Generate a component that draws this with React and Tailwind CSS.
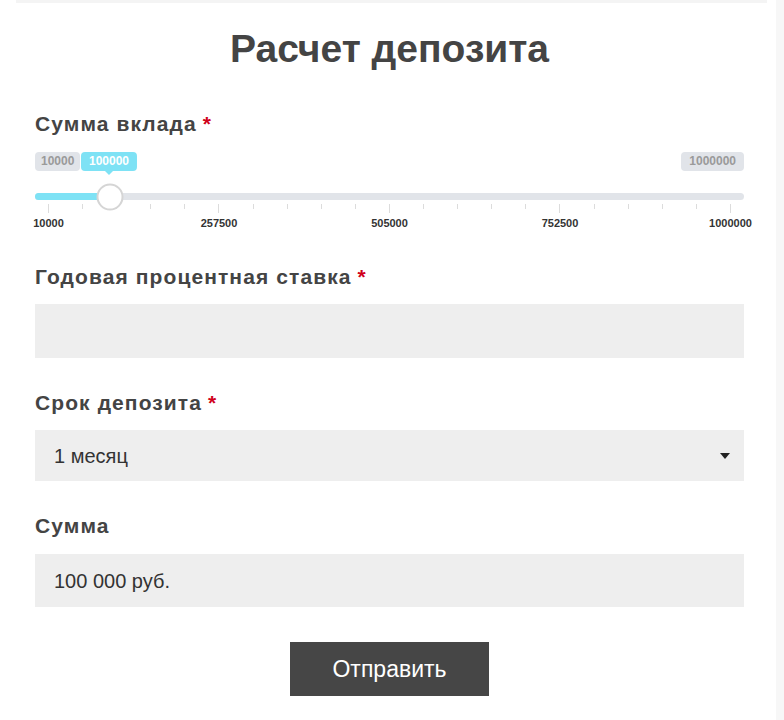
import React from 'react';

const MIN = 10000;
const MAX = 1000000;
const VALUE = 100000;

// grid spans from 13px to 695px inside the 709px slider box
const GRID_LEFT = 13;
const GRID_WIDTH = 682;

const Label = ({ children, required, className = '' }) => (
    <div className={`text-[21px] leading-[24px] font-bold tracking-[1.1px] text-[#444] ${className}`}>
        {children}
        {required && <span className="text-[#d0021b] ml-[6px]">*</span>}
    </div>
);

const Pill = ({ children, className = '' }) => (
    <div className={`h-[19px] rounded-[4px] bg-[#e1e4e9] text-[#9a9a9a] text-[12px] font-bold leading-[19px] ${className}`}>
        {children}
    </div>
);

const RangeSlider = () => {
    const pos = GRID_LEFT + ((VALUE - MIN) / (MAX - MIN)) * GRID_WIDTH;
    const ticks = Array.from({ length: 21 }, (_, i) => i % 5 === 0);
    const labels = [10000, 257500, 505000, 752500, 1000000];

    return (
        <div className="mt-[14px] flex flex-col">
            {/* min / max pills, current value floats over them */}
            <div className="relative flex justify-between pt-[2px]">
                <Pill className="px-[6px]">{MIN}</Pill>
                <Pill className="px-[8px]">{MAX}</Pill>
                <div
                    className="absolute top-[2px] -translate-x-1/2 h-[19px] px-[8px] rounded-[4px] bg-[#7ee2f5] text-white text-[12px] font-bold leading-[19px]"
                    style={{ left: pos - 1 }}
                >
                    {VALUE}
                    <span className="absolute left-1/2 -translate-x-1/2 top-full w-0 h-0 border-x-[4px] border-x-transparent border-t-[4px] border-t-[#7ee2f5]" />
                </div>
            </div>

            {/* track */}
            <div className="relative mt-[22px] h-[7px] rounded-full bg-[#e1e4e9]">
                <div className="h-full rounded-full bg-[#7ee2f5]" style={{ width: pos }} />
                <div
                    className="absolute top-1/2 -translate-x-1/2 -translate-y-1/2 w-[27px] h-[27px] rounded-full bg-white border-2 border-[#d5d5d5]"
                    style={{ left: pos }}
                />
            </div>

            {/* ticks */}
            <div className="mt-[4px] ml-[13px] w-[683px] flex justify-between items-start">
                {ticks.map((major, i) => (
                    <div key={i} className={`w-px bg-[#dcdcdc] ${major ? 'h-[9px]' : 'h-[5px]'}`} />
                ))}
            </div>
            <div className="mt-[4px] ml-[13px] w-[683px] flex justify-between">
                {labels.map((l) => (
                    <div key={l} className="w-px flex justify-center">
                        <span className="text-[11px] font-bold text-[#333] leading-[13px]">{l}</span>
                    </div>
                ))}
            </div>
        </div>
    );
};

export default function App() {
    return (
        <div className="relative w-[784px] h-[720px] bg-white overflow-hidden font-['Liberation_Sans',Arial,sans-serif]">
            {/* page chrome strips */}
            <div className="absolute left-[16px] right-[17px] top-0 h-[3px] bg-[#f4f4f4]" />
            <div className="absolute right-0 top-0 bottom-0 w-[8px] bg-[#f7f7f7]" />

            <div className="px-[35px] w-[779px] flex flex-col">
                <h1 className="pt-[26px] text-center text-[39px] leading-[45px] font-bold text-[#444]">
                    Расчет депозита
                </h1>

                <Label required className="mt-[41px]">Сумма вклада</Label>
                <RangeSlider />

                <Label required className="mt-[35px]">Годовая процентная ставка</Label>
                <div className="mt-[15px] h-[54px] bg-[#eeeeee]" />

                <Label required className="mt-[33px]">Срок депозита</Label>
                <div className="mt-[15px] h-[51px] bg-[#eeeeee] flex items-center justify-between pl-[19px] pr-[14px]">
                    <span className="text-[20px] text-[#333]">1 месяц</span>
                    <span className="w-0 h-0 border-x-[5px] border-x-transparent border-t-[6px] border-t-[#222]" />
                </div>

                <Label className="mt-[33px]">Сумма</Label>
                <div className="mt-[16px] h-[53px] bg-[#eeeeee] flex items-center pl-[19px]">
                    <span className="text-[20px] text-[#333]">100 000 руб.</span>
                </div>

                <div className="flex justify-center mt-[35px]">
                    <button className="w-[199px] h-[54px] bg-[#464646] text-white text-[23px]">
                        Отправить
                    </button>
                </div>
            </div>
        </div>
    );
}
